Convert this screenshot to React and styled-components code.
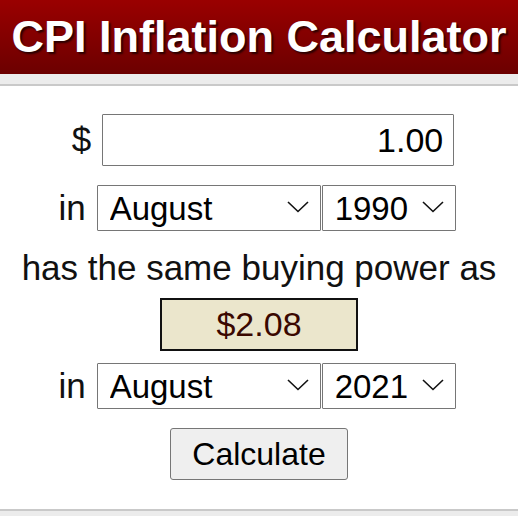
import styled, { createGlobalStyle } from "styled-components";

const Global = createGlobalStyle`
    body{
        margin: 0;
        font-family: "Liberation Sans", Arial, sans-serif;
        background: #fff;
    }
`

const Chevron = () => (
    <ChevronIcon width="22" height="12" viewBox="0 0 22 12">
        <path d="M1 1 L11 10.5 L21 1" fill="none" stroke="#111" strokeWidth="1.6" />
    </ChevronIcon>
)

const Picker = ({ value, options, width }) => (
    <PickerWrap $width={width}>
        <Select defaultValue={value}>
            {options.map(o => <option key={o}>{o}</option>)}
        </Select>
        <Chevron />
    </PickerWrap>
)

const months = ['January', 'February', 'March', 'April', 'May', 'June', 'July',
    'August', 'September', 'October', 'November', 'December']
const years = []
for (let y = 1913; y <= 2021; y++) years.push(String(y))

const App = () => {
    return (
        <Page>
            <Global />
            <Header>
                <h1>CPI Inflation Calculator</h1>
            </Header>
            <Band />
            <Form>
                <Row $shift={8}>
                    <Label>$</Label>
                    <Amount defaultValue="1.00" />
                </Row>
                <Row $top={19} $shift={-4}>
                    <Label>in</Label>
                    <Pickers>
                        <Picker value="August" options={months} width={224} />
                        <Picker value="1990" options={years} width={134} />
                    </Pickers>
                </Row>
                <Sentence>has the same buying power as</Sentence>
                <Result>$2.08</Result>
                <Row $top={12} $shift={-4}>
                    <Label>in</Label>
                    <Pickers>
                        <Picker value="August" options={months} width={224} />
                        <Picker value="2021" options={years} width={134} />
                    </Pickers>
                </Row>
                <Button>Calculate</Button>
            </Form>
            <Footer />
        </Page>
    );
}

const Page = styled.div`
    display: flex;
    flex-direction: column;
    min-height: 100vh;
`
const Header = styled.div`
    height: 74px;
    background: linear-gradient(180deg, #9a0000, #6c0000);
    display: flex;
    justify-content: center;

    h1{
        margin: 0;
        font-size: 45px;
        line-height: 74px;
        font-weight: 700;
        color: #fff;
        text-shadow: 2px 2px 2px #2a0000;
        white-space: nowrap;
    }
`
const Band = styled.div`
    height: 10px;
    background: #ececec;
    border-bottom: 2px solid #c9c9c9;
`
const Form = styled.div`
    display: flex;
    flex-direction: column;
    align-items: center;
    padding: 28px 0 29px;
`
const Row = styled.div`
    display: flex;
    align-items: center;
    gap: 11px;
    margin-top: ${p => p.$top || 0}px;
    margin-left: ${p => p.$shift || 0}px;
`
const Label = styled.span`
    font-size: 35px;
    color: #111;
`
const Amount = styled.input`
    box-sizing: border-box;
    width: 352px;
    height: 52px;
    border: 1px solid #767676;
    border-radius: 1px;
    padding: 0 10px;
    font: 34px "Liberation Sans", Arial, sans-serif;
    color: #000;
    text-align: right;
    outline: none;
`
const Pickers = styled.div`
    display: flex;
    gap: 1px;
`
const PickerWrap = styled.div`
    position: relative;
    width: ${p => p.$width}px;
`
const Select = styled.select`
    box-sizing: border-box;
    width: 100%;
    height: 46px;
    appearance: none;
    border: 1px solid #767676;
    border-radius: 1px;
    background: #fff;
    padding: 0 0 0 12px;
    font: 33px "Liberation Sans", Arial, sans-serif;
    color: #000;
    outline: none;
`
const ChevronIcon = styled.svg`
    position: absolute;
    right: 12px;
    top: 16px;
    pointer-events: none;
`
const Sentence = styled.div`
    margin-top: 17px;
    font-size: 35px;
    line-height: 40px;
    color: #111;
    white-space: nowrap;
`
const Result = styled.div`
    box-sizing: border-box;
    margin-top: 10px;
    width: 198px;
    height: 53px;
    border: 2px solid #111;
    background: #ebe6cc;
    color: #3a0800;
    font-size: 34px;
    line-height: 49px;
    text-align: center;
`
const Button = styled.button`
    box-sizing: border-box;
    margin-top: 19px;
    width: 178px;
    height: 52px;
    background: #efefef;
    border: 1px solid #767676;
    border-radius: 3px;
    font: 32px "Liberation Sans", Arial, sans-serif;
    color: #000;
    padding: 0;
`
const Footer = styled.div`
    flex: 1;
    background: #ececec;
    border-top: 2px solid #c9c9c9;
`
export default App;
